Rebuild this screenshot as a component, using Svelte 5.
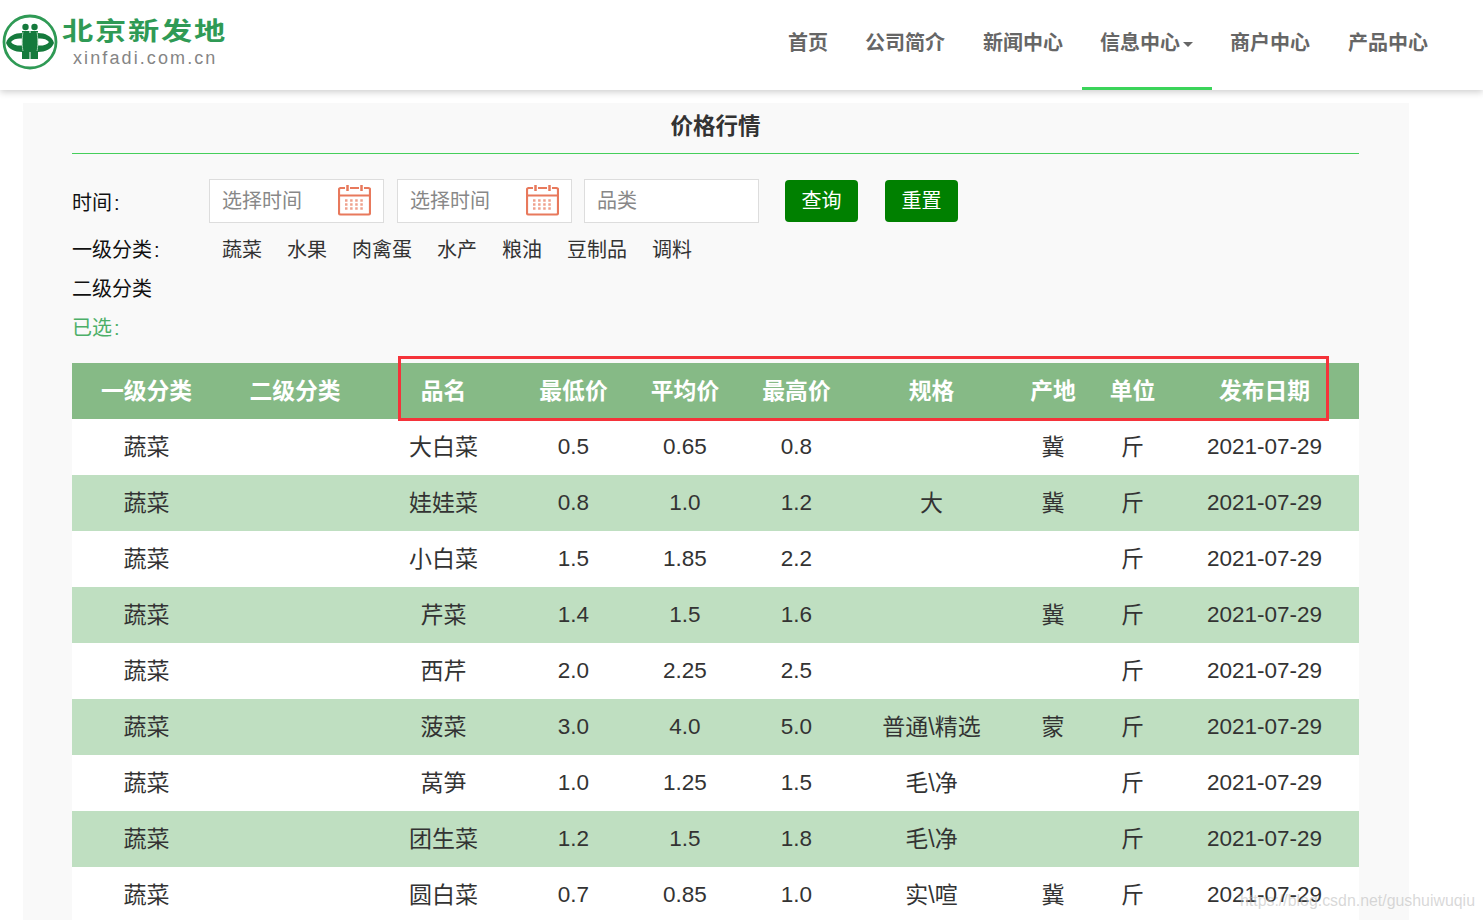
<script>
  const nav = ['首页', '公司简介', '新闻中心', '信息中心', '商户中心', '产品中心'];
  const cats = ['蔬菜', '水果', '肉禽蛋', '水产', '粮油', '豆制品', '调料'];
  const heads = ['一级分类', '二级分类', '品名', '最低价', '平均价', '最高价', '规格', '产地', '单位', '发布日期'];
  const widths = [149, 148, 149, 111, 112, 111, 159, 84, 75, 189];
  const rows = [
    ['大白菜', '0.5', '0.65', '0.8', '', '冀'],
    ['娃娃菜', '0.8', '1.0', '1.2', '大', '冀'],
    ['小白菜', '1.5', '1.85', '2.2', '', ''],
    ['芹菜', '1.4', '1.5', '1.6', '', '冀'],
    ['西芹', '2.0', '2.25', '2.5', '', ''],
    ['菠菜', '3.0', '4.0', '5.0', '普通\\精选', '蒙'],
    ['莴笋', '1.0', '1.25', '1.5', '毛\\净', ''],
    ['团生菜', '1.2', '1.5', '1.8', '毛\\净', ''],
    ['圆白菜', '0.7', '0.85', '1.0', '实\\喧', '冀']
  ];
  const isNum = (s) => /^[\d.]+$/.test(s);
</script>

{#snippet calendar()}
  <svg class="cal" width="33" height="32" viewBox="0 0 33 32" fill="none" stroke="#e8795c" stroke-width="2.200">
    <path d="M7 4H2.500A1.500 1.500 0 0 0 1 5.500V29a1.500 1.500 0 0 0 1.500 1.500h28A1.500 1.500 0 0 0 32 29V5.500A1.500 1.500 0 0 0 30.500 4H26" />
    <path d="M12 4h9M1 11.500h31" />
    <path d="M9.500 1v6M23.500 1v6" stroke-width="2.500" />
    <path d="M7 16.500h19M7 20.500h19M7 24.500h19" stroke-width="2.500" stroke-dasharray="2.500 2.600" opacity="0.7" />
  </svg>
{/snippet}

<header class="top">
  <div class="logo">
    <svg class="emblem" width="58" height="58" viewBox="0 0 58 58">
      <circle cx="29" cy="29" r="26" fill="#fff" stroke="#2f9a55" stroke-width="2.800" />
      <path d="M5 30C7 23 14 20 21 20H37C44 20 51 23 53 30C51 36 44 39 37 39H21C14 39 7 36 5 30Z" fill="#157a3c" />
      <path d="M10 29C12 26 17 25 21 25.500V32.500C17 33 12 32 10 29ZM48 29C46 26 41 25 37 25.500V32.500C41 33 46 32 48 29Z" fill="#fff" />
      <circle cx="24.500" cy="14" r="3.200" fill="#157a3c" />
      <circle cx="33.500" cy="14" r="3.200" fill="#157a3c" />
      <path d="M21 18h7.500v28H21zM29.500 18H37v28h-7.500z" fill="#157a3c" />
      <path d="M22 19c-1 4-1 16 0 19M36 19c1 4 1 16 0 19" stroke="#9fd0ae" stroke-width="1" fill="none" />
    </svg>
    <div class="brand">
      <span class="cn">北京新发地</span>
      <span class="en">xinfadi.com.cn</span>
    </div>
  </div>
  <nav class="nav">
    {#each nav as item}
      <span class="nav-item" class:active={item === '信息中心'}>{item}{#if item === '信息中心'}<i class="caret"></i>{/if}</span>
    {/each}
  </nav>
</header>

<main class="panel">
  <h1 class="title">价格行情</h1>

  <section class="filters">
    <div class="row time">
      <span class="label">时间<span class="colon">:</span></span>
      <div class="field"><span>选择时间</span>{@render calendar()}</div>
      <div class="field second"><span>选择时间</span>{@render calendar()}</div>
      <div class="field last"><span>品类</span></div>
      <button class="btn first">查询</button>
      <button class="btn">重置</button>
    </div>
    <div class="row">
      <span class="label">一级分类<span class="colon">:</span></span>
      <div class="cats">
        {#each cats as c}<span>{c}</span>{/each}
      </div>
    </div>
    <div class="row"><span class="label">二级分类</span></div>
    <div class="row chosen-row"><span class="label chosen">已选<span class="colon">:</span></span></div>
  </section>

  <div class="table-wrap">
    <table>
      <colgroup>
        {#each widths as w}<col style="width:{w}px" />{/each}
      </colgroup>
      <thead>
        <tr>{#each heads as h}<th>{h}</th>{/each}</tr>
      </thead>
      <tbody>
        {#each rows as r}
          <tr>
            <td class="cjk">蔬菜</td>
            <td></td>
            {#each r as cell}<td class:cjk={!isNum(cell)}>{cell}</td>{/each}
            <td class="cjk">斤</td>
            <td>2021-07-29</td>
          </tr>
        {/each}
      </tbody>
    </table>
    <div class="mark"></div>
  </div>
</main>

<div class="watermark">https://blog.csdn.net/gushuiwuqiu</div>

<style>
  :global(html), :global(body) {
    margin: 0;
    height: 920px;
    overflow: hidden;
    background: #fff;
  }
  :global(body) {
    font-family: "Liberation Sans", "Noto Sans CJK SC", sans-serif;
    color: #333;
  }
  .top {
    height: 90px;
    background: #fff;
    box-shadow: 0 2px 7px rgba(0, 0, 0, 0.2);
    display: flex;
    justify-content: space-between;
    position: relative;
    box-sizing: border-box;
    padding: 0 36px 0 1px;
  }
  .logo {
    display: flex;
    align-items: flex-start;
    gap: 3px;
    padding-top: 13px;
  }
  .emblem { display: block; }
  .brand {
    display: flex;
    flex-direction: column;
    padding-top: 3px;
  }
  .cn {
    font-size: 25px;
    line-height: 30px;
    font-weight: 700;
    color: #2f9a55;
    letter-spacing: 1.400px;
    white-space: nowrap;
    transform: scaleX(1.25);
    transform-origin: left center;
  }
  .en {
    font-size: 18px;
    line-height: 24px;
    color: #858585;
    letter-spacing: 2.100px;
    padding-left: 11px;
  }
  .nav { display: flex; }
  .nav-item {
    height: 90px;
    box-sizing: border-box;
    padding: 0 19px;
    font-size: 20px;
    font-weight: 700;
    line-height: 86px;
    color: #666;
    white-space: nowrap;
  }
  .nav-item:nth-child(1) { padding-right: 18px; }
  .nav-item:nth-child(5) { padding-left: 18px; }
  .nav-item.active {
    border-bottom: 3px solid #3bd45a;
    padding: 0 19px 0 18px;
  }
  .caret {
    display: inline-block;
    vertical-align: middle;
    margin-left: 3px;
    border-top: 5px solid #666;
    border-left: 5px solid transparent;
    border-right: 5px solid transparent;
  }
  .panel {
    margin: 13px 74px 0 23px;
    padding: 0 50px 0 49px;
    background: #f9f9f9;
    height: 817px;
    box-sizing: border-box;
  }
  .title {
    margin: 0;
    height: 51px;
    box-sizing: border-box;
    border-bottom: 1px solid #45cf5b;
    font-size: 22.500px;
    line-height: 48px;
    font-weight: 700;
    text-align: center;
    color: #333;
  }
  .filters {
    padding-top: 25px;
    font-size: 20px;
    color: #222;
  }
  .row {
    display: flex;
    align-items: center;
    height: 39px;
  }
  .row.time {
    height: 44px;
    margin-bottom: 6px;
  }
  .label {
    width: 137px;
    flex: none;
    color: #111;
    white-space: nowrap;
  }
  .colon { margin-left: 2px; }
  .chosen-row { padding-bottom: 2px; }
  .chosen { color: #4caf68; }
  .field {
    width: 175px;
    height: 44px;
    box-sizing: border-box;
    border: 1px solid #ddd;
    background: #fff;
    margin-right: 13px;
    padding: 0 12px 3px 12px;
    display: flex;
    align-items: center;
    justify-content: space-between;
    color: #888;
  }
  .field.second { margin-right: 12px; }
  .field.last { margin-right: 0; }
  .cal { display: block; margin-top: 1px; }
  .btn {
    width: 73px;
    height: 42px;
    padding: 0 0 3px;
    border: 0;
    border-radius: 4px;
    background: #008000;
    color: #fff;
    font: inherit;
    margin-right: 27px;
  }
  .btn.first { margin-left: 26px; }
  .cats {
    display: flex;
    gap: 25px;
    padding-left: 13px;
    color: #333;
  }
  .table-wrap {
    position: relative;
    margin-top: 15px;
  }
  table {
    width: 1287px;
    table-layout: fixed;
    border-collapse: collapse;
    font-size: 22.500px;
  }
  th, td {
    height: 56px;
    box-sizing: border-box;
    padding: 0;
    text-align: center;
    white-space: nowrap;
  }
  th {
    background: #86ba86;
    color: #fff;
    font-weight: 700;
    font-size: 22.800px;
    padding-bottom: 4px;
  }
  td.cjk {
    font-size: 23px;
    padding-bottom: 4px;
  }
  tbody tr { background: #fff; }
  tbody tr:nth-child(even) { background: #bfdfc1; }
  .mark {
    position: absolute;
    left: 326px;
    top: -7px;
    width: 931px;
    height: 65px;
    box-sizing: border-box;
    border: 3px solid #f5333a;
    pointer-events: none;
  }
  .watermark {
    position: absolute;
    left: 1240px;
    top: 891px;
    font-size: 15.900px;
    line-height: 20px;
    color: rgba(190, 190, 190, 0.6);
    white-space: nowrap;
  }
</style>
